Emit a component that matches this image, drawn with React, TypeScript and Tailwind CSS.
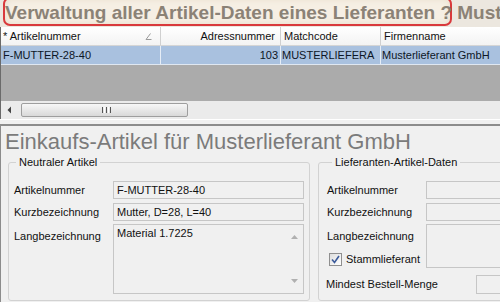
import React from "react";

const labelCls = "text-[11px] leading-[13px] text-[#111]";
const fieldCls = "border border-[#c6c6c6] bg-[#f0f0f0] text-[11px] leading-[13px] text-[#111] px-[3px] pt-[2px]";

function SortGlyph() {
	return (
		<svg width="7" height="7" viewBox="0 0 7 7" className="ml-auto mr-[8px]">
			<path d="M5.5 0.5 L1 6.5 L6.5 6.5" fill="none" stroke="#9a9a9a" strokeWidth="1" />
		</svg>
	);
}

function GridArea() {
	return (
		<div className="border-l border-[#6a6a6a]">
			<div className="flex h-[19px] items-center border-b border-[#d5d5d5] bg-gradient-to-b from-[#ffffff] to-[#f3f3f3] text-[11px] text-[#111]">
				<div className="flex h-full w-[160px] items-center border-r border-[#d0d0d0] pl-[2px]">
					<span>* Artikelnummer</span>
					<SortGlyph />
				</div>
				<div className="flex h-full w-[120px] items-center justify-end border-r border-[#d0d0d0] pr-[5px]">Adressnummer</div>
				<div className="flex h-full w-[100px] items-center border-r border-[#d0d0d0] pl-[3px]">Matchcode</div>
				<div className="flex h-full flex-1 items-center pl-[3px]">Firmenname</div>
			</div>
			<div className="flex h-[19px] items-center border-b border-[#dfe7f1] bg-[#a9c1df] text-[11px] text-[#0c1626]">
				<div className="flex h-full w-[160px] items-center border-r border-[#e6edf6] pl-[2px]">F-MUTTER-28-40</div>
				<div className="flex h-full w-[120px] items-center justify-end border-r border-[#e6edf6] pr-[2px]">103</div>
				<div className="flex h-full w-[100px] items-center overflow-hidden whitespace-nowrap border-r border-[#e6edf6] pl-[1px]">MUSTERLIEFERA</div>
				<div className="flex h-full flex-1 items-center pl-[1px]">Musterlieferant GmbH</div>
			</div>
			<div className="h-[36px] bg-[#ababab]" />
			<div className="flex h-[18px] items-center bg-[#ebebeb]">
				<svg width="20" height="18" viewBox="0 0 20 18">
					<path d="M10 5.5 L6.5 9 L10 12.5 Z" fill="#444" />
				</svg>
				<div className="flex h-[14px] w-[167px] items-center justify-center rounded-[2px] border border-[#9e9e9e] bg-gradient-to-b from-[#f7f7f7] to-[#d9d9d9]">
					<div className="ml-[3px] flex gap-[1px]">
						<div className="h-[6px] w-[1px] bg-[#555]" />
						<div className="h-[6px] w-[1px] bg-[#fff]" />
						<div className="h-[6px] w-[1px] bg-[#555]" />
						<div className="h-[6px] w-[1px] bg-[#fff]" />
						<div className="h-[6px] w-[1px] bg-[#555]" />
					</div>
				</div>
			</div>
		</div>
	);
}

function NeutralGroup() {
	return (
		<fieldset className="ml-[7px] h-[145px] w-[302px] shrink-0 rounded-[3px] border border-[#d2d2d2] pl-[5px] pr-[5px]">
			<legend className={`${labelCls} ml-[2px] px-[3px]`}>Neutraler Artikel</legend>
			<div className="mt-[12px] grid grid-cols-[99px_191px] gap-y-[4px]">
				<div className={`${labelCls} pt-[3px]`}>Artikelnummer</div>
				<div className={`${fieldCls} h-[18px]`}>F-MUTTER-28-40</div>
				<div className={`${labelCls} pt-[3px]`}>Kurzbezeichnung</div>
				<div className={`${fieldCls} h-[18px]`}>Mutter, D=28, L=40</div>
				<div className={`${labelCls} pt-[5px]`}>Langbezeichnung</div>
				<div className={`${fieldCls} relative -mt-[1px] h-[70px]`}>
					Material 1.7225
					<div className="absolute right-0 top-0 flex h-full w-[17px] flex-col items-center justify-between py-[10px]">
						<svg width="7" height="4" viewBox="0 0 7 4"><path d="M0 4 L3.5 0 L7 4 Z" fill="#b0b0b0" /></svg>
						<svg width="7" height="4" viewBox="0 0 7 4"><path d="M0 0 L3.5 4 L7 0 Z" fill="#b0b0b0" /></svg>
					</div>
				</div>
			</div>
		</fieldset>
	);
}

function SupplierGroup() {
	return (
		<fieldset className="ml-[8px] h-[145px] w-[200px] shrink-0 rounded-[3px] border border-[#d2d2d2] pl-[8px]">
			<legend className={`${labelCls} ml-[5px] px-[3px]`}>Lieferanten-Artikel-Daten</legend>
			<div className="mt-[12px] grid grid-cols-[99px_90px] gap-y-[4px]">
				<div className={`${labelCls} pt-[3px]`}>Artikelnummer</div>
				<div className={`${fieldCls} h-[18px]`} />
				<div className={`${labelCls} pt-[3px]`}>Kurzbezeichnung</div>
				<div className={`${fieldCls} h-[18px]`} />
				<div className="-mt-[1px] flex h-[44px] flex-col justify-between">
					<div className={`${labelCls} pt-[6px]`}>Langbezeichnung</div>
					<div className="flex items-center gap-[4px] pb-[2px] pl-[2px]">
						<div className="flex h-[13px] w-[13px] items-center justify-center border border-[#8f8f8f] bg-gradient-to-br from-[#dedede] to-[#ffffff]">
							<svg width="9" height="9" viewBox="0 0 9 9">
								<path d="M1 4.5 L3.5 7.5 L8 1" fill="none" stroke="#3b5a9a" strokeWidth="1.6" />
							</svg>
						</div>
						<span className={labelCls}>Stammlieferant</span>
					</div>
				</div>
				<div className={`${fieldCls} -mt-[1px] h-[44px]`} />
			</div>
			<div className="mt-[7px] flex items-center -ml-[1px]">
				<div className={`${labelCls} w-[150px]`}>Mindest Bestell-Menge</div>
				<div className={`${fieldCls} h-[19px] w-[40px]`} />
			</div>
		</fieldset>
	);
}

export default function App() {
	return (
		<div className="h-[302px] w-[500px] overflow-hidden bg-[#f0f0f0] font-['Liberation_Sans',Arial,sans-serif]">
			<div className="relative h-[27px] overflow-hidden bg-[#ece7df]">
				<div className="absolute left-[3px] top-[-3px] h-[29px] w-[449px] rounded-[7px] border-2 border-[#d9393c] bg-[#f6efe4] shadow-[inset_0_0_6px_#e7dcc9]" />
				<div className="relative whitespace-nowrap pl-[5px] pt-[2px] text-[19px] font-bold leading-[22px] text-[#8b8276]">
					Verwaltung aller Artikel-Daten eines Lieferanten ? Must
				</div>
			</div>
			<GridArea />
			<div className="h-[5px] border-t border-[#ffffff] bg-[#f0f0f0]" />
			<div className="h-[178px] border-l border-t-2 border-[#8c8c8c] bg-[#f0f0f0]">
				<div className="pl-[4px] pt-[3px] text-[22px] leading-[26px] text-[#7b7b7b]">Einkaufs-Artikel für Musterlieferant GmbH</div>
				<div className="mt-[1px] flex">
					<NeutralGroup />
					<SupplierGroup />
				</div>
			</div>
		</div>
	);
}
